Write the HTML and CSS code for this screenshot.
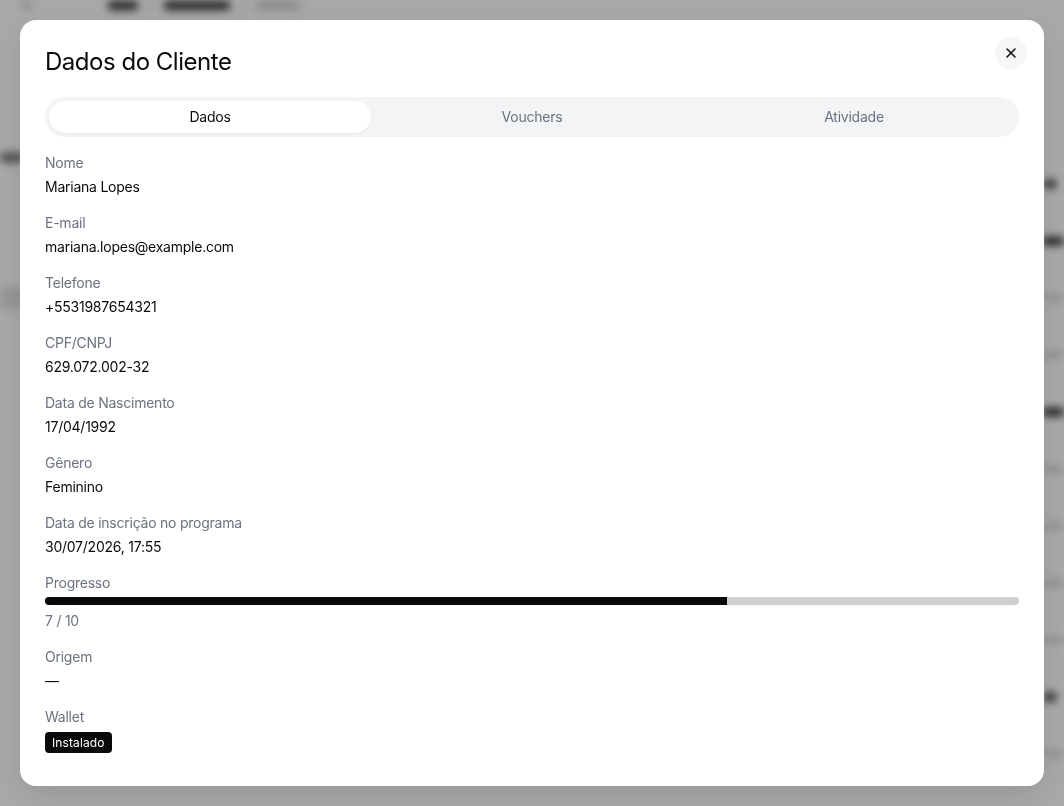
FILE: index.html
```html
<!DOCTYPE html>
<html lang="pt-BR">
<head>
    <meta charset="UTF-8">
    <meta name="viewport" content="width=device-width, initial-scale=1.0">
    <title>Dados do Cliente</title>
    <link rel="stylesheet" href="styles.css">
</head>
<body>
    <!-- Page behind the dialog (blurred, only shapes remain visible) -->
    <div class="page" aria-hidden="true">
        <div class="breadcrumb">
            <span class="blob blob-back"></span>
            <span class="blob blob-crumb"></span>
            <span class="blob blob-sep"></span>
            <span class="blob blob-crumb wide"></span>
            <span class="blob blob-sep"></span>
            <span class="blob blob-crumb light"></span>
        </div>
        <div class="list">
            <div class="row"><span class="blob blob-left"></span><span class="blob blob-right dark short"></span></div>
            <div class="row"><span></span><span class="blob blob-right dark"></span></div>
            <div class="row"><span class="blob blob-left light"></span><span class="blob blob-right"></span></div>
            <div class="row"><span></span><span class="blob blob-right"></span></div>
            <div class="row"><span></span><span class="blob blob-right dark"></span></div>
            <div class="row"><span></span><span class="blob blob-right"></span></div>
            <div class="row"><span></span><span class="blob blob-right"></span></div>
            <div class="row"><span></span><span class="blob blob-right"></span></div>
            <div class="row"><span></span><span class="blob blob-right"></span></div>
            <div class="row"><span></span><span class="blob blob-right dark short"></span></div>
            <div class="row"><span></span><span class="blob blob-right"></span></div>
        </div>
    </div>

    <div class="backdrop">
        <div class="modal" role="dialog" aria-labelledby="modalTitle">
            <button type="button" class="close-btn" aria-label="Fechar">
                <svg width="12" height="12" viewBox="0 0 12 12" fill="none" stroke="#111" stroke-width="1.6" stroke-linecap="round">
                    <path d="M2 2 L10 10 M10 2 L2 10"/>
                </svg>
            </button>
            <h2 id="modalTitle" class="modal-title">Dados do Cliente</h2>

            <div class="tabs">
                <button type="button" class="tab active">Dados</button>
                <button type="button" class="tab">Vouchers</button>
                <button type="button" class="tab">Atividade</button>
            </div>

            <div class="fields">
                <div class="field">
                    <div class="field-label">Nome</div>
                    <div class="field-value">Mariana Lopes</div>
                </div>
                <div class="field">
                    <div class="field-label">E-mail</div>
                    <div class="field-value">mariana.lopes@example.com</div>
                </div>
                <div class="field">
                    <div class="field-label">Telefone</div>
                    <div class="field-value">+5531987654321</div>
                </div>
                <div class="field">
                    <div class="field-label">CPF/CNPJ</div>
                    <div class="field-value">629.072.002-32</div>
                </div>
                <div class="field">
                    <div class="field-label">Data de Nascimento</div>
                    <div class="field-value">17/04/1992</div>
                </div>
                <div class="field">
                    <div class="field-label">Gênero</div>
                    <div class="field-value">Feminino</div>
                </div>
                <div class="field">
                    <div class="field-label">Data de inscrição no programa</div>
                    <div class="field-value">30/07/2026, 17:55</div>
                </div>
                <div class="field">
                    <div class="field-label">Progresso</div>
                    <div class="progress">
                        <div class="progress-fill" style="width: 70%"></div>
                    </div>
                    <div class="progress-text">7 / 10</div>
                </div>
                <div class="field">
                    <div class="field-label">Origem</div>
                    <div class="field-value dash">—</div>
                </div>
                <div class="field">
                    <div class="field-label">Wallet</div>
                    <div><span class="badge">Instalado</span></div>
                </div>
            </div>
        </div>
    </div>
</body>
</html>
```

FILE: styles.css
```css
body {
    font-family: Inter, "Noto Sans", Arial, sans-serif;
    letter-spacing: -0.015em;
    margin: 0;
    background-color: #fff;
    color: #0a0a0a;
    overflow: hidden;
}

/* background page (blurred under the dialog) */
.page {
    filter: blur(4px);
    height: 806px;
    overflow: hidden;
}
.blob {
    display: block;
    height: 9px;
    border-radius: 3px;
    background-color: #c8c8c8;
}
.breadcrumb {
    display: flex;
    align-items: center;
    gap: 12px;
    height: 12px;
    margin-top: -1px;
    padding-left: 22px;
}
.blob-back {
    width: 10px;
    margin-right: 64px;
    background-color: #d6d6d6;
}
.blob-crumb {
    width: 30px;
    background-color: #333;
}
.blob-crumb.wide {
    width: 66px;
}
.blob-crumb.light {
    width: 44px;
    background-color: #d0d0d0;
}
.blob-sep {
    width: 2px;
    height: 12px;
    background-color: #ccc;
}
.list {
    margin-top: 144px;
}
.row {
    display: flex;
    justify-content: space-between;
    align-items: center;
    height: 57px;
}
.blob-left {
    width: 24px;
    height: 9px;
    margin-bottom: 52px;
    background-color: #666;
}
.blob-left.light {
    height: 22px;
    margin-bottom: 0;
    background-color: #e2e2e2;
}
.blob-right {
    width: 22px;
    height: 6px;
    background-color: #d2d2d2;
}
.blob-right.dark {
    height: 8px;
    background-color: #222;
}
.blob-right.short {
    width: 12px;
    margin-right: 8px;
}

/* dialog */
.backdrop {
    position: fixed;
    inset: 0;
    background-color: rgba(0, 0, 0, 0.34);
    display: flex;
    align-items: center;
    justify-content: center;
}
.modal {
    position: relative;
    box-sizing: border-box;
    width: 1024px;
    height: 766px;
    padding: 25px;
    background-color: #fff;
    border-radius: 16px;
    box-shadow: 0 10px 30px rgba(0, 0, 0, 0.1);
}
.close-btn {
    position: absolute;
    top: 17px;
    right: 17px;
    width: 32px;
    height: 32px;
    border: none;
    border-radius: 50%;
    background-color: #f5f6f6;
    display: flex;
    align-items: center;
    justify-content: center;
    padding: 0;
    cursor: pointer;
}
.modal-title {
    margin: 1px 0 0;
    font-size: 24px;
    line-height: 32px;
    font-weight: 400;
    letter-spacing: -0.02em;
    color: #0a0a0a;
}
.tabs {
    display: grid;
    grid-template-columns: 1fr 1fr 1fr;
    margin-top: 19px;
    padding: 4px;
    height: 40px;
    box-sizing: border-box;
    background-color: #f3f4f6;
    border-radius: 20px;
}
.tab {
    border: none;
    background: none;
    font-family: inherit;
    letter-spacing: inherit;
    font-size: 14px;
    line-height: 20px;
    padding: 0 0 1px;
    color: #6b7280;
    border-radius: 16px;
    cursor: pointer;
}
.tab.active {
    background-color: #fff;
    color: #0a0a0a;
    box-shadow: 0 1px 2px rgba(0, 0, 0, 0.06);
}
.fields {
    display: flex;
    flex-direction: column;
    gap: 16px;
    margin-top: 16px;
}
.field-label {
    font-size: 14px;
    line-height: 20px;
    color: #6b7280;
    margin-bottom: 4px;
}
.field-value {
    font-size: 14px;
    line-height: 20px;
    color: #0a0a0a;
}
.field-value.dash {
    margin-top: 2px;
}
.progress {
    height: 8px;
    background-color: #cfcfcf;
    border-radius: 4px;
    overflow: hidden;
}
.progress-fill {
    height: 100%;
    background-color: #0a0a0a;
}
.progress-text {
    margin-top: 6px;
    font-size: 14px;
    line-height: 20px;
    color: #6b7280;
}
.badge {
    display: inline-block;
    padding: 0 7px;
    height: 21px;
    line-height: 21px;
    font-size: 12px;
    letter-spacing: 0.01em;
    color: #fff;
    background-color: #0a0a0a;
    border-radius: 4px;
}
```
